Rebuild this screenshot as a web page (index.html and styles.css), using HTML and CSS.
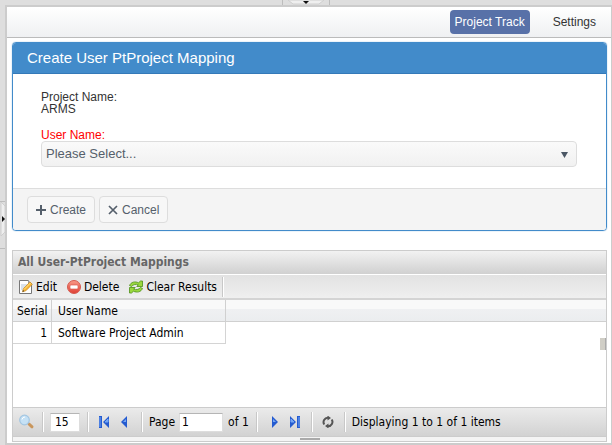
FILE: index.html
```html
<!DOCTYPE html>
<html lang="en">
<head>
<meta charset="utf-8">
<title>Project Track</title>
<link rel="stylesheet" href="styles.css">
</head>
<body>
<div class="layout">
  <div class="split-top"><div class="split-top-box">
    <svg width="36" height="5" viewBox="0 0 36 5"><path d="M0 0h36l-5 4H5z" fill="#efefef" stroke="#cfcfcf"/><path d="M15 1h6l-3 3z" fill="#111"/></svg>
  </div></div>
  <div class="split-left"><div class="split-left-box">
    <svg width="5" height="34" viewBox="0 0 5 34"><path d="M1 0l4 4v26l-4 4z" fill="#efefef" stroke="#cfcfcf"/><path d="M2 14l3 3-3 3z" fill="#111"/></svg>
  </div></div>
  <main class="main">
    <nav class="nav">
      <a class="nav-link active" href="#">Project Track</a>
      <a class="nav-link" href="#">Settings</a>
    </nav>
    <div class="content">
      <form class="panel">
        <h1 class="panel-title">Create User PtProject Mapping</h1>
        <div class="panel-body">
          <div class="field">
            <div>Project Name:</div>
            <div>ARMS</div>
          </div>
          <div class="field">
            <label class="required" for="user">User Name:</label>
            <div class="select-wrap">
              <select id="user" class="select"><option>Please Select...</option></select>
              <svg class="select-arrow" width="7" height="6" viewBox="0 0 7 6"><path d="M0 0h7L3.500 6z" fill="#4b5765"/></svg>
            </div>
          </div>
        </div>
        <div class="panel-footer">
          <button class="btn" type="button"><svg width="10" height="10" viewBox="0 0 10 10"><path d="M5 0v10M0 5h10" stroke="#555f6b" stroke-width="2"/></svg>Create</button>
          <button class="btn" type="button"><svg width="10" height="10" viewBox="0 0 10 10"><path d="M1 1l8 8M9 1L1 9" stroke="#555f6b" stroke-width="1.700"/></svg>Cancel</button>
        </div>
      </form>
      <section class="grid">
        <h2 class="grid-title">All User-PtProject Mappings</h2>
        <div class="toolbar">
          <button class="tool" type="button">
            <svg width="16" height="16" viewBox="0 0 16 16"><path d="M1.500 1.500h9l3 3v10h-12z" fill="#fff" stroke="#777"/><path d="M10.500 1.500v3h3" fill="#eee" stroke="#999"/><path d="M3 6h6M3 8h4M3 10h2" stroke="#b5c5d6"/><path d="M4.500 12.800l1-3.300L12 3l2.300 2.300-6.500 6.500z" fill="#f8b635" stroke="#c98519" stroke-width=".7"/><path d="M6 10.500l6.500-6.500" stroke="#ffe48a"/><path d="M4.500 12.800l.5-1.700 1.200 1.200z" fill="#333"/></svg>Edit</button>
          <button class="tool" type="button">
            <svg width="16" height="16" viewBox="0 0 16 16"><defs><linearGradient id="red" x2="0" y2="1"><stop stop-color="#f99c8a"/><stop offset="1" stop-color="#df3e33"/></linearGradient></defs><circle cx="8" cy="8" r="6.500" fill="url(#red)" stroke="#d65b50"/><rect x="4" y="6" width="8" height="4" rx="1" fill="#fff" stroke="#dd5f55" stroke-width=".7"/></svg>Delete</button>
          <button class="tool" type="button">
            <svg width="16" height="16" viewBox="0 0 16 16"><path d="M1.500 6.500C3 3 7 2 10.500 3.800l2-1.800h2v5.500H8.800l1.500-1.700C8 4.800 5 5.500 3.500 7.500z" fill="#9ad83e" stroke="#4d8f18" stroke-width=".8"/><path d="M14.500 9.500c-1.500 3.500-5.500 4.500-9 2.700l-2 1.800h-2V8.500h5.700l-1.500 1.700c2.300 1 5.300.3 6.800-1.700z" fill="#9ad83e" stroke="#4d8f18" stroke-width=".8"/></svg>Clear Results</button>
          <span class="sep"></span>
        </div>
        <div class="table-area">
          <table class="table">
            <thead><tr><th class="serial">Serial</th><th class="name">User Name</th><th></th></tr></thead>
            <tbody><tr><td class="serial">1</td><td class="name">Software Project Admin</td><td class="blank"></td></tr></tbody>
          </table>
          <span class="thumb"></span>
        </div>
        <div class="pager">
          <button class="icon" type="button" aria-label="Search"><svg width="16" height="16" viewBox="0 0 16 16"><path d="M10 10l3 2.800" stroke="#c9965c" stroke-width="3" stroke-linecap="round"/><circle cx="5.500" cy="6" r="4.800" fill="#c5e1f5" stroke="#a3c6e2" stroke-width="1.200"/><path d="M3 5.500a3 3 0 0 1 3-2.500" stroke="#fff" fill="none"/></svg></button>
          <span class="sep"></span>
          <input class="box size" aria-label="Page size" value="15">
          <span class="sep"></span>
          <button class="icon first" type="button" aria-label="First page"><svg width="10" height="12" viewBox="0 0 10 12"><path d="M0 0h3v12H0zM10 0v12L4 6z" fill="#245bd0"/><path d="M1 1v10M9 3v3L6 6z" stroke="#75a7f4" fill="#75a7f4"/></svg></button>
          <button class="icon prev" type="button" aria-label="Previous page"><svg width="6" height="12" viewBox="0 0 6 12"><path d="M6 0v12L0 6z" fill="#245bd0"/><path d="M5 3v3L2 6z" fill="#75a7f4"/></svg></button>
          <span class="sep"></span>
          <label class="page" for="page">Page</label>
          <input id="page" class="box number" value="1">
          <span class="total">of 1</span>
          <span class="sep"></span>
          <button class="icon next" type="button" aria-label="Next page"><svg width="6" height="12" viewBox="0 0 6 12"><path d="M0 0v12l6-6z" fill="#245bd0"/><path d="M1 3v3h3z" fill="#75a7f4"/></svg></button>
          <button class="icon last" type="button" aria-label="Last page"><svg width="10" height="12" viewBox="0 0 10 12"><path d="M10 0H7v12h3zM0 0v12l6-6z" fill="#245bd0"/><path d="M9 1v10M1 3v3h3z" stroke="#75a7f4" fill="#75a7f4"/></svg></button>
          <span class="sep"></span>
          <button class="icon reload" type="button" aria-label="Refresh"><svg width="12" height="12" viewBox="0 0 12 12"><path d="M2.300 8.500A4.300 4.300 0 0 1 6 1.800M9.700 3.500A4.300 4.300 0 0 1 6 10.200" fill="none" stroke="#555" stroke-width="2"/><path d="M5.500-.5l3.500 2.500-3.500 2.500zM6.500 12.500L3 10l3.500-2.500z" fill="#555"/></svg></button>
          <span class="sep"></span>
          <span>Displaying 1 to 1 of 1 items</span>
        </div>
        <div class="resize"><span></span></div>
      </section>
    </div>
  </main>
</div>
</body>
</html>
```

FILE: styles.css
```css
* { box-sizing: border-box; }
body { margin: 0; font: 12px/12px "Liberation Sans", Arial, sans-serif; color: #333; }
button, input, select { font: inherit; color: inherit; margin: 0; }
svg { display: block; flex: none; }
.layout { display: grid; grid-template: 5px 1fr / 5px 1fr; min-height: 100vh; background: #dedede; }
.split-top { grid-column: 1 / 3; display: flex; justify-content: center; }
.split-top-box { width: 48px; border: solid #bdbdbd; border-width: 0 1px; display: flex; justify-content: center; }
.split-left { display: flex; flex-direction: column; justify-content: center; }
.split-left-box { height: 48px; border: solid #bdbdbd; border-width: 1px 0; }
.main { display: flex; flex-direction: column; min-width: 0; border: solid #ccc; border-width: 2px 1px 2px 2px; background: #fff; }
.nav { display: flex; justify-content: flex-end; gap: 8px; height: 31px; padding: 3px 0; border-bottom: 1px solid #bbb; background: linear-gradient(#fff, #eff0f2); }
.nav-link { display: flex; align-items: center; height: 24px; padding: 0 5px; border-radius: 4px; color: #333; text-decoration: none; margin-right: 10px; }
.nav-link.active { background: #5871a8; color: #fff; }
.content { flex: 1; display: flex; flex-direction: column; gap: 19px; padding: 4px 4px 1px 5px; }
.panel { border: 1px solid #428bca; border-radius: 4px; overflow: hidden; box-shadow: 0 0 1px #428bca; }
.panel-title { margin: 0; padding: 0 14px; background: #428bca; border-bottom: 1px solid #3479b8; color: #fff; font-size: 15px; font-weight: normal; line-height: 30px; }
.panel-body { padding: 17px 29px 21px 28px; display: flex; flex-direction: column; gap: 14px; }
.required { color: #f00; display: block; }
.select-wrap { position: relative; }
.select { display: block; width: 100%; height: 26px; padding: 0 4px; appearance: none; border: 1px solid #ddd; border-radius: 4px; background: linear-gradient(#fafafa, #f1f1f1); color: #555f6b; font-size: 13px; }
.select-arrow { position: absolute; right: 9px; top: 11px; pointer-events: none; }
.panel-footer { display: flex; gap: 4px; padding: 7px 14px; border-top: 1px solid #ddd; background: #f4f4f4; }
.btn { display: flex; align-items: center; gap: 4px; height: 27px; padding: 0 8px; border: 1px solid #ddd; border-radius: 4px; background: #f7f7f7; color: #555f6b; }
.grid { flex: 1; display: flex; flex-direction: column; border: 1px solid #ccc; color: #000; font-family: "DejaVu Sans Condensed", "Noto Sans", sans-serif; }
.grid-title { margin: 0; padding: 0 5px; font-size: 12px; line-height: 23px; color: #666; background: linear-gradient(#f2f2f2, #d0d0d0); border-bottom: 1px solid #fff; }
.toolbar { display: flex; align-items: center; height: 25px; gap: 9px; padding: 0 5px; background: linear-gradient(#e2e2e2, #efefef); border-bottom: 2px solid #d4d4d4; }
.tool { display: flex; align-items: center; gap: 2px; padding: 0; border: 0; background: none; }
.toolbar .sep { margin-left: -4px; }
.sep { width: 2px; height: 20px; border-left: 1px solid #c8c8c8; background: #fff; flex: none; }
.table-area { flex: 1; position: relative; }
.table { width: 100%; border-collapse: separate; border-spacing: 0; table-layout: fixed; }
.table th { height: 22px; padding: 0 6px; font-weight: normal; text-align: left; border: solid #d0d0d0; border-width: 0 1px 1px 0; background: linear-gradient(#f9f9f9 45%, #eff0f2 45%, #ebedef); }
.table th:last-child { border-right: 0; }
.table td { height: 22px; padding: 0 6px; border: solid #d4d4d4; border-width: 0 1px 1px 0; }
.table td.blank { border: 0; }
.table .serial { width: 39px; padding: 0 4px; text-align: right; }
.table .name { width: 174px; }
.thumb { position: absolute; right: 0; top: 38px; width: 6px; height: 12px; background: #d0cec6; border-right: 1px solid #aaa; }
.pager { display: flex; align-items: center; height: 30px; border-top: 1px solid #ccc; border-bottom: 1px solid #ccc; background: linear-gradient(#ebebeb, #d2d2d2); padding: 0 6px; white-space: nowrap; }
.icon { padding: 0; border: 0; background: none; }
.pager .sep { margin: 0 6px 0 7px; }
.box { height: 19px; padding: 0 4px; border: 1px solid #ddd; border-top-color: #b5b5b5; background: #fff; min-width: 0; }
.box.size { width: 30px; }
.pager .size + .sep { margin-right: 10px; }
.first { margin-right: 12px; }
.pager .prev + .sep { margin-left: 14px; }
.page { margin-right: 4px; }
.box.number { width: 44px; padding: 0 2px; margin-right: 5px; }
.next { margin: 0 12px 0 8px; }
.last { margin-right: 4px; }
.reload { margin: 0 3px; }
.resize { display: flex; justify-content: center; align-items: center; height: 4px; background: #f4f4f4; }
.resize span { width: 20px; height: 2px; background: #aaa; }
```
